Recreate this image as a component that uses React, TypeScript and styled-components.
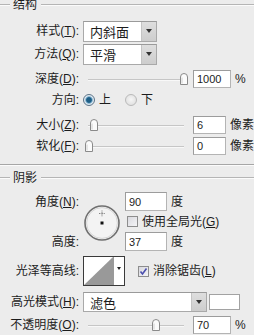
import React from "react";
import styled, { createGlobalStyle } from "styled-components";

const GlobalStyle = createGlobalStyle`
  body {
    margin: 0;
    background: #ececec;
    font-family: "Liberation Sans", "Noto Sans CJK SC", sans-serif;
    color: #1c1c1c;
  }
`;

const Panel = styled.div`
  width: 254px;
  height: 335px;
  overflow: hidden;
  display: flex;
  flex-direction: column;
  background: #ececec;
  font-size: 12px;
`;

type GapProps = { $top?: number; $h?: number };

const GroupHeader = styled.div<GapProps>`
  display: flex;
  align-items: center;
  height: ${(p) => p.$h ?? 10}px;
  margin-top: ${(p) => p.$top ?? 0}px;
  line-height: 12px;

  &::before,
  &::after {
    content: "";
    height: 0;
    border-top: 1px solid #b5b5b5;
    border-bottom: 1px solid #fbfbfb;
  }
  &::before {
    width: 10px;
  }
  &::after {
    flex: 1;
  }
`;

const GroupTitle = styled.span`
  padding: 0 4px 0 3px;
`;

const Separator = styled.div<GapProps>`
  margin-top: ${(p) => p.$top ?? 0}px;
  border-top: 1px solid #a6a6a6;
  border-bottom: 1px solid #fbfbfb;
`;

const Row = styled.div<GapProps>`
  display: flex;
  align-items: center;
  height: ${(p) => p.$h ?? 20}px;
  margin-top: ${(p) => p.$top ?? 0}px;
  white-space: nowrap;
`;

const Label = styled.span`
  flex: none;
  width: 79px;
  margin-right: 4px;
  text-align: right;
  line-height: 14px;
`;

const Unit = styled.span`
  margin-left: 4px;
  line-height: 14px;
`;

const SelectBox = styled.div<{ $w: number; $h?: number }>`
  display: flex;
  width: ${(p) => p.$w}px;
  height: ${(p) => p.$h ?? 21}px;
  box-sizing: border-box;
  border: 1px solid #a9a9a9;
  border-top-color: #9a9a9a;
  background: #fff;
`;

const SelectText = styled.span`
  flex: 1;
  padding-left: 6px;
  display: flex;
  align-items: center;
  font-size: 13px;
`;

const SelectButton = styled.span`
  flex: none;
  width: 14px;
  display: flex;
  align-items: center;
  justify-content: center;
  background: linear-gradient(#dedede, #cdcdcd);
  border-left: 1px solid #c4c4c4;

  &::after {
    content: "";
    border-left: 3px solid transparent;
    border-right: 3px solid transparent;
    border-top: 4px solid #333;
  }
`;

const NumberInput = styled.span<{ $w?: number; $h?: number }>`
  display: flex;
  align-items: center;
  width: ${(p) => p.$w ?? 38}px;
  height: ${(p) => p.$h ?? 18}px;
  box-sizing: border-box;
  padding-left: 3px;
  border: 1px solid #b4b4b4;
  border-top-color: #9c9c9c;
  border-left-color: #9c9c9c;
  background: #fff;
  font-size: 11px;
`;

const SliderWrap = styled.div`
  position: relative;
  flex: none;
  width: 102px;
  height: 14px;
  margin-left: 2px;
  margin-right: 6px;
`;

const Track = styled.div`
  position: absolute;
  left: 3px;
  right: 3px;
  top: 7px;
  border-top: 1px solid #c6c6c6;
  border-bottom: 1px solid #f8f8f8;
`;

const Thumb = styled.svg`
  position: absolute;
  top: 1px;
`;

const Slider = ({ value }: { value: number }) => (
  <SliderWrap>
    <Track />
    <Thumb
      width="8"
      height="12"
      viewBox="0 0 8 12"
      style={{ left: Math.round(value * 95) }}
    >
      <path
        d="M0.5 11.5 V4 Q0.5 0.5 4 0.5 Q7.5 0.5 7.5 4 V11.5 Z"
        fill="#fbfbfb"
        stroke="#8a8a8a"
      />
      <path d="M2 10.5 V4.5" stroke="#d0d0d0" />
    </Thumb>
  </SliderWrap>
);

const Radio = styled.span<{ $on?: boolean }>`
  flex: none;
  position: relative;
  width: 12px;
  height: 12px;
  box-sizing: border-box;
  border-radius: 50%;
  border: 1px solid ${(p) => (p.$on ? "#5d7488" : "#b9b9b9")};
  background: ${(p) =>
    p.$on
      ? "radial-gradient(circle at 50% 50%, #1f5f86 0 2.4px, #6fa6c8 3.2px, #dfe9f0 4.2px)"
      : "radial-gradient(circle at 50% 45%, #f6f6f6, #dadada)"};
`;

const OptionText = styled.span<{ $gap?: number }>`
  margin-left: 4px;
  margin-right: ${(p) => p.$gap ?? 0}px;
  line-height: 14px;
`;

const Check = styled.span<{ $on?: boolean }>`
  flex: none;
  width: 11px;
  height: 11px;
  box-sizing: border-box;
  border: 1px solid #8d8d8d;
  background: linear-gradient(135deg, #d9d9df, #f4f4f6);
  display: flex;
  align-items: center;
  justify-content: center;
`;

const CheckLabel = styled.span`
  margin-left: 4px;
  line-height: 14px;
`;

const AngleGrid = styled.div<GapProps>`
  display: grid;
  grid-template-columns: 83px 42px 1fr;
  grid-template-rows: 19px 21px 19px;
  margin-top: ${(p) => p.$top ?? 0}px;
  align-items: center;
  white-space: nowrap;
`;

const GridLabel = styled.span<{ $row: number }>`
  grid-column: 1;
  grid-row: ${(p) => p.$row};
  padding-right: 4px;
  text-align: right;
  line-height: 14px;
`;

const GridCell = styled.div<{ $row: number }>`
  grid-column: 3;
  grid-row: ${(p) => p.$row};
  display: flex;
  align-items: center;
`;

const Dial = styled.svg`
  grid-column: 2;
  grid-row: 1 / 4;
  margin-top: 3px;
`;

const Contour = styled.div`
  display: flex;
  width: 42px;
  height: 30px;
  box-sizing: border-box;
  border: 1px solid #3a3a3a;
  background: #fff;
  margin-right: 13px;
`;

const ContourArrow = styled.span`
  flex: none;
  width: 11px;
  display: flex;
  justify-content: center;
  padding-top: 10px;
  box-sizing: border-box;
  border-left: 1px solid #9a9a9a;

  &::after {
    content: "";
    height: 0;
    border-left: 2.5px solid transparent;
    border-right: 2.5px solid transparent;
    border-top: 3px solid #222;
  }
`;

const Swatch = styled.span`
  width: 31px;
  height: 16px;
  box-sizing: border-box;
  margin-left: 2px;
  border: 1px solid #a2a2a2;
  background: #fff;
`;

const Key = ({ k }: { k: string }) => (
  <>
    (<u>{k}</u>):
  </>
);

const CheckMark = () => (
  <svg width="9" height="9" viewBox="0 0 9 9">
    <path d="M1.5 4.5 L3.5 7 L7.5 1.5" fill="none" stroke="#4b4fae" strokeWidth="1.6" />
  </svg>
);

export default function App() {
  return (
    <Panel>
      <GlobalStyle />
      <GroupHeader>
        <GroupTitle>结构</GroupTitle>
      </GroupHeader>

      <Row $top={10} $h={22}>
        <Label>
          样式<Key k="T" />
        </Label>
        <SelectBox $w={74}>
          <SelectText>内斜面</SelectText>
          <SelectButton />
        </SelectBox>
      </Row>
      <Row $top={1} $h={22}>
        <Label>
          方法<Key k="Q" />
        </Label>
        <SelectBox $w={74}>
          <SelectText>平滑</SelectText>
          <SelectButton />
        </SelectBox>
      </Row>
      <Row $top={4}>
        <Label>
          深度<Key k="D" />
        </Label>
        <Slider value={1} />
        <NumberInput>1000</NumberInput>
        <Unit>%</Unit>
      </Row>
      <Row $top={1}>
        <Label>方向:</Label>
        <Radio $on />
        <OptionText $gap={14}>上</OptionText>
        <Radio />
        <OptionText>下</OptionText>
      </Row>
      <Row $top={5}>
        <Label>
          大小<Key k="Z" />
        </Label>
        <Slider value={0.05} />
        <NumberInput>6</NumberInput>
        <Unit>像素</Unit>
      </Row>
      <Row $top={1}>
        <Label>
          软化<Key k="F" />
        </Label>
        <Slider value={0} />
        <NumberInput>0</NumberInput>
        <Unit>像素</Unit>
      </Row>

      <Separator $top={8} />

      <GroupHeader $top={6} $h={12}>
        <GroupTitle>阴影</GroupTitle>
      </GroupHeader>

      <AngleGrid $top={8}>
        <GridLabel $row={1}>
          角度<Key k="N" />
        </GridLabel>
        <Dial width="38" height="38" viewBox="0 0 38 38">
          <circle cx="19" cy="19" r="17" fill="#f3f3f3" stroke="#6f6f6f" strokeWidth="1.6" />
          <circle cx="19" cy="19" r="15.4" fill="none" stroke="#d6d6d6" strokeWidth="1" />
          <path d="M19 6.5 V12.5 M16 9.5 H22" stroke="#777" strokeWidth="0.9" strokeDasharray="1 0.6" />
          <rect x="17.5" y="17.5" width="3" height="3" fill="#111" />
        </Dial>
        <GridCell $row={1}>
          <NumberInput $w={42} $h={19}>90</NumberInput>
          <Unit>度</Unit>
        </GridCell>
        <GridCell $row={2}>
          <Check style={{ marginLeft: 2 }} />
          <CheckLabel>
            使用全局光(<u>G</u>)
          </CheckLabel>
        </GridCell>
        <GridLabel $row={3}>高度:</GridLabel>
        <GridCell $row={3}>
          <NumberInput $w={42} $h={19}>37</NumberInput>
          <Unit>度</Unit>
        </GridCell>
      </AngleGrid>

      <Row $top={5} $h={30}>
        <Label>光泽等高线:</Label>
        <Contour>
          <svg width="29" height="28" viewBox="0 0 29 28">
            <polygon points="0,28 29,0 29,28" fill="#999" />
          </svg>
          <ContourArrow />
        </Contour>
        <Check $on>
          <CheckMark />
        </Check>
        <CheckLabel>
          消除锯齿(<u>L</u>)
        </CheckLabel>
      </Row>
      <Row $top={6}>
        <Label>
          高光模式<Key k="H" />
        </Label>
        <SelectBox $w={124} $h={20}>
          <SelectText>滤色</SelectText>
          <SelectButton />
        </SelectBox>
        <Swatch />
      </Row>
      <Row $top={3} $h={19}>
        <Label>
          不透明度<Key k="O" />
        </Label>
        <Slider value={0.7} />
        <NumberInput>70</NumberInput>
        <Unit>%</Unit>
      </Row>
    </Panel>
  );
}
